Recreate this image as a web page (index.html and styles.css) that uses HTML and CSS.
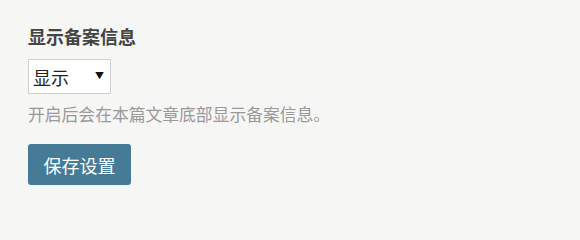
FILE: index.html
```html
<!DOCTYPE html>
<html lang="zh-CN">
<head>
<meta charset="utf-8">
<title>显示备案信息</title>
<link rel="stylesheet" href="styles.css">
</head>
<body>
<div class="panel">
  <h3 class="title">显示备案信息</h3>
  <div class="select-wrap">
    <select class="select">
      <option>显示</option>
      <option>隐藏</option>
    </select>
    <span class="arrow">▼</span>
  </div>
  <p class="desc">开启后会在本篇文章底部显示备案信息。</p>
  <button class="btn" type="button">保存设置</button>
</div>
</body>
</html>
```

FILE: styles.css
```css
html, body {
  margin: 0;
  padding: 0;
  background: #f6f6f4;
}
body {
  font-family: "Noto Sans CJK SC", "Noto Sans", sans-serif;
}
.panel {
  padding: 25px 28px 20px;
  display: flex;
  flex-direction: column;
  align-items: flex-start;
}
.title {
  margin: 0;
  font-size: 18px;
  line-height: 22px;
  font-weight: bold;
  color: #444;
}
.select-wrap {
  position: relative;
  margin-top: 12px;
  width: 83px;
  height: 35px;
}
.select {
  appearance: none;
  -webkit-appearance: none;
  width: 83px;
  height: 35px;
  margin: 0;
  padding: 0 0 0 4px;
  border: 1px solid #d0d0d0;
  border-radius: 0;
  background: #fff;
  font-family: inherit;
  font-size: 18px;
  color: #222;
  outline: none;
}
.arrow {
  position: absolute;
  left: 67px;
  top: 11px;
  font-size: 9px;
  line-height: 12px;
  color: #111;
  pointer-events: none;
}
.desc {
  margin: 8px 0 0;
  font-size: 16.8px;
  line-height: 24px;
  color: #999;
}
.btn {
  margin-top: 18px;
  width: 103px;
  height: 41px;
  padding: 0;
  border: none;
  border-radius: 3px;
  background: #457b97;
  color: #fff;
  font-family: inherit;
  font-size: 18px;
  cursor: pointer;
}
```
